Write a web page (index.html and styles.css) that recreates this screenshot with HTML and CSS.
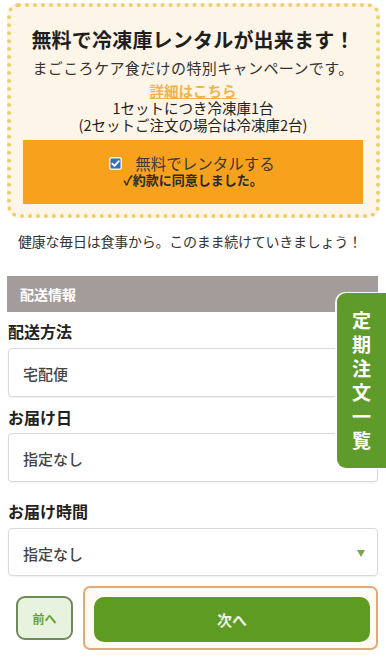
FILE: index.html
```html
<!DOCTYPE html>
<html lang="ja">
<head>
<meta charset="utf-8">
<title>配送情報</title>
<link rel="stylesheet" href="styles.css">
</head>
<body>
<div class="page">
  <section class="campaign">
    <h1 class="campaign-title">無料で冷凍庫レンタルが出来ます！</h1>
    <p class="campaign-sub">まごころケア食だけの特別キャンペーンです。</p>
    <a class="campaign-link" href="#">詳細はこちら</a>
    <p class="campaign-line">1セットにつき冷凍庫1台</p>
    <p class="campaign-line">(2セットご注文の場合は冷凍庫2台)</p>
    <div class="rental">
      <div class="rental-row">
        <span class="check"><svg width="13" height="13" viewBox="0 0 13 13"><rect x="0.75" y="0.75" width="11.5" height="11.5" rx="2" fill="#3a6fb8" stroke="#e8eef8" stroke-width="1.5"/><path d="M3.3 6.6 L5.5 8.8 L9.8 4.2" fill="none" stroke="#fff" stroke-width="1.8" stroke-linecap="round" stroke-linejoin="round"/></svg></span>
        <span class="rental-label">無料でレンタルする</span>
      </div>
      <div class="rental-agree">✓約款に同意しました。</div>
    </div>
  </section>

  <p class="message">健康な毎日は食事から。このまま続けていきましょう！</p>

  <div class="section-bar">配送情報</div>

  <div class="form-label first">配送方法</div>
  <div class="field">宅配便</div>

  <div class="form-label">お届け日</div>
  <div class="field">指定なし</div>

  <div class="form-label gap">お届け時間</div>
  <div class="field select">指定なし<span class="arrow"></span></div>

  <div class="actions">
    <button class="btn-prev" type="button">前へ</button>
    <div class="next-wrap">
      <button class="btn-next" type="button">次へ</button>
    </div>
  </div>
</div>

<a class="side-tab" href="#">定期注文一覧</a>
</body>
</html>
```

FILE: styles.css
```css
* { box-sizing: border-box; }
html, body { margin: 0; padding: 0; background: #fff; }
body {
  font-family: "Noto Sans CJK JP", "Noto Sans", sans-serif;
  color: #222;
  width: 386px;
  overflow: hidden;
}
.page {
  padding: 3px 8px 20px 8px;
}
.campaign {
  margin: 0 -2px 0 -1px;
  border: 4px dotted #efcd6a;
  border-radius: 12px;
  background: #fdf5e8;
  padding: 19px 13px 10px 12px;
  text-align: center;
}
.campaign-title {
  margin: 0;
  font-size: 20px;
  line-height: 28px;
  font-weight: 700;
  color: #1e1e1e;
  letter-spacing: 0.2px;
}
.campaign-sub {
  margin: 0;
  font-size: 15px;
  line-height: 27px;
  color: #333;
  letter-spacing: 0.4px;
}
.campaign-link {
  display: block;
  margin-top: 1px;
  font-size: 14.5px;
  line-height: 17px;
  color: #efb44c;
  font-weight: 700;
  text-decoration: underline;
}
.campaign-line {
  margin: 0;
  font-size: 14.5px;
  line-height: 17px;
  color: #222;
}
.rental {
  margin-top: 7px;
  background: #f8a11c;
  height: 64px;
  padding-top: 14px;
}
.rental-row {
  display: flex;
  justify-content: center;
  align-items: center;
  gap: 13px;
  height: 19px;
  margin-left: -2px;
}
.check { display: flex; width: 13px; height: 13px; }
.rental-label {
  font-size: 15.5px;
  line-height: 19px;
  color: #3a3a3a;
}
.rental-agree {
  margin-top: 0;
  font-size: 13px;
  line-height: 14px;
  font-weight: 700;
  color: #2a2a2a;
}
.message {
  margin: 13px 0 0 10px;
  font-size: 14px;
  line-height: 20px;
  color: #333;
  letter-spacing: -0.25px;
}
.section-bar {
  margin: 25px 0 0 -1px;
  height: 36px;
  background: #a39c9b;
  color: #fff;
  font-size: 14px;
  font-weight: 700;
  line-height: 36px;
  padding-left: 13px;
}
.form-label {
  margin-top: 8px;
  font-size: 16px;
  font-weight: 700;
  line-height: 24px;
  color: #222;
}
.form-label.first { margin-top: 7px; }
.form-label.gap { margin-top: 17px; }
.field {
  position: relative;
  margin-top: 5px;
  height: 49px;
  border: 1px solid #d9d9d9;
  border-radius: 4px;
  background: #fff;
  box-shadow: 0 1px 2px rgba(0,0,0,0.06);
  padding: 2px 0 0 14px;
  display: flex;
  align-items: center;
  font-size: 15px;
  font-weight: 500;
  color: #444;
}
.form-label + .field { margin-top: 4px; }
.form-label.first + .field, .form-label.gap + .field { margin-top: 5px; }
.field.select { height: 48px; }
.arrow {
  position: absolute;
  right: 12px;
  top: 21px;
  width: 0;
  height: 0;
  border-left: 4px solid transparent;
  border-right: 4px solid transparent;
  border-top: 7px solid #7ea547;
}
.actions {
  display: flex;
  align-items: center;
  gap: 10px;
  margin-top: 10px;
  padding-left: 8px;
}
.btn-prev {
  width: 57px;
  height: 44px;
  border: 2px solid #6d8a58;
  border-radius: 9px;
  background: #e7f3df;
  color: #64a032;
  font-family: inherit;
  font-size: 12px;
  font-weight: 700;
  padding: 0;
}
.next-wrap {
  flex: 1;
  height: 64px;
  border: 2px solid #e2aa78;
  border-radius: 7px;
  background: #fffaf3;
  padding: 9px 6px 6px 9px;
  display: flex;
}
.btn-next {
  flex: 1;
  border: 0;
  border-radius: 10px;
  background: #5d9b23;
  color: #f0f2e4;
  font-family: inherit;
  font-size: 15px;
  font-weight: 700;
  padding: 0;
}
.side-tab {
  position: absolute;
  top: 293px;
  right: 0;
  width: 49px;
  height: 175px;
  background: #5e9b2b;
  border-radius: 9px 0 0 9px;
  box-shadow: -1px 0 0 1px rgba(255,255,255,0.9);
  color: #fff;
  text-decoration: none;
  writing-mode: vertical-rl;
  font-size: 19px;
  font-weight: 700;
  letter-spacing: 5px;
  display: flex;
  align-items: center;
  justify-content: center;
  padding-top: 5px;
}
```
